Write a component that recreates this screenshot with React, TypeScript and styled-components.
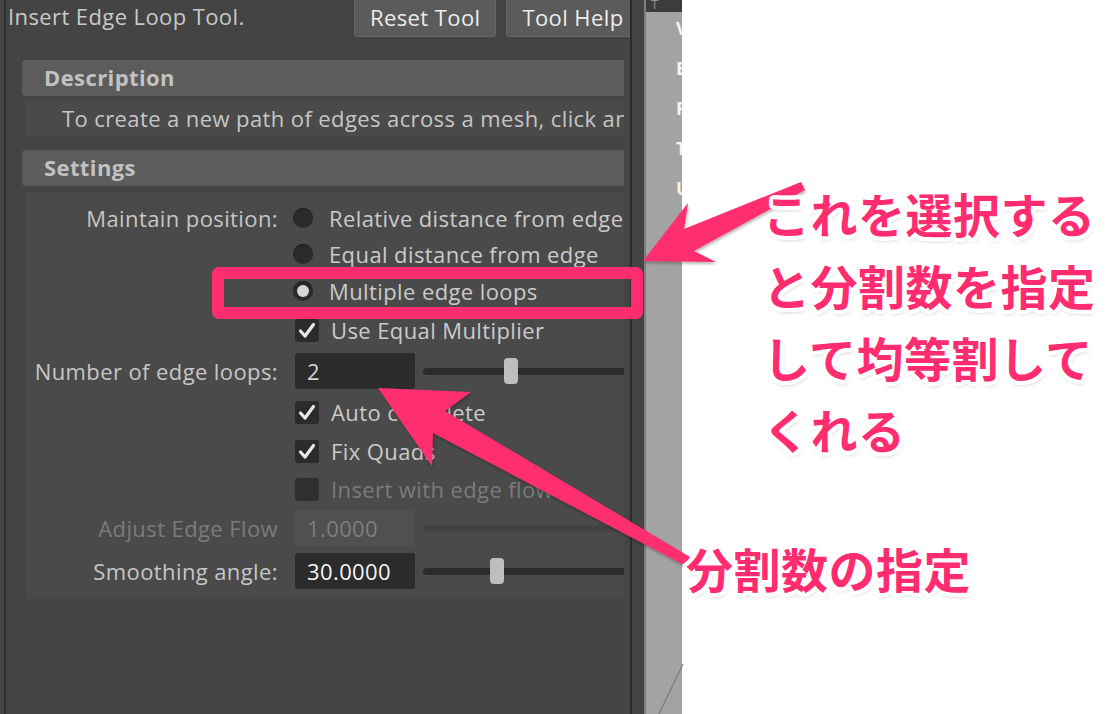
import React from "react";
import styled, { createGlobalStyle } from "styled-components";

const UI_FONT = `"Open Sans", "Noto Sans", "Liberation Sans", sans-serif`;
const JP_FONT = `"Noto Sans CJK JP", "Noto Sans CJK SC", sans-serif`;
const PINK = "#ff2d6f";

const GlobalStyle = createGlobalStyle`
  html, body { margin: 0; padding: 0; background: #ffffff; }
  body { font-family: ${UI_FONT}; }
`;

const Page = styled.div`
  position: relative;
  width: 1118px;
  height: 714px;
  overflow: hidden;
  display: flex;
  background: #ffffff;
  font-family: ${UI_FONT};
  letter-spacing: 0.4px;
`;

/* ---------- tool settings panel ---------- */
const Panel = styled.div`
  flex: 0 0 632px;
  box-sizing: border-box;
  height: 100%;
  padding-left: 4px;
  background: #444444;
  border-right: 2px solid #2b2b2b;
  overflow: hidden;
`;

const PanelInner = styled.div`
  height: 100%;
  border-left: 2px solid #2e2e2e;
  display: flex;
  flex-direction: column;
`;

const TopBar = styled.div`
  display: flex;
  align-items: flex-start;
  height: 37px;
  flex: 0 0 37px;
`;

const ToolTitle = styled.div`
  flex: 0 0 346px;
  padding-left: 2px;
  line-height: 32px;
  font-size: 22px;
  color: #c9c9c9;
  white-space: nowrap;
`;

const ToolButton = styled.div`
  flex: 0 0 auto;
  box-sizing: border-box;
  margin-top: -3px;
  margin-right: 10px;
  height: 40px;
  padding: 0 15px;
  display: flex;
  align-items: center;
  background: #5b5b5b;
  border: 1px solid #676767;
  border-radius: 3px;
  color: #ececec;
  font-size: 22px;
  white-space: nowrap;
`;

const ScrollArea = styled.div`
  width: 618px;
  margin-top: 23px;
  overflow: hidden;
  flex: 1;
`;

const SectionHeader = styled.div<{ $gap?: number }>`
  margin-left: 16px;
  margin-right: -10px;
  margin-top: ${(p) => p.$gap ?? 0}px;
  height: 36px;
  line-height: 35px;
  padding-left: 22px;
  background: #5c5c5c;
  border-radius: 4px;
  font-size: 22px;
  font-weight: 700;
  color: #c2c2c2;
`;

const SectionBody = styled.div`
  margin-left: 20px;
  margin-right: -10px;
  background: #4a4a4a;
`;

const DescriptionBody = styled(SectionBody)`
  margin-top: 5px;
  height: 35px;
  line-height: 35px;
  padding-left: 36px;
  font-size: 22px;
  color: #c6c6c6;
  white-space: nowrap;
  overflow: hidden;
`;

const SettingsBody = styled(SectionBody)`
  margin-top: 6px;
  padding: 8px 0 5px;
`;

const Row = styled.div<{ $h: number }>`
  display: grid;
  grid-template-columns: 252px 1fr;
  column-gap: 15px;
  align-items: center;
  height: ${(p) => p.$h}px;
`;

const Label = styled.div<{ $disabled?: boolean }>`
  text-align: right;
  font-size: 22px;
  color: ${(p) => (p.$disabled ? "#7b7b7b" : "#c6c6c6")};
  white-space: nowrap;
`;

const Controls = styled.div`
  display: flex;
  align-items: center;
  white-space: nowrap;
`;

const RadioDot = styled.div<{ $on?: boolean }>`
  flex: 0 0 20px;
  height: 20px;
  border-radius: 50%;
  background: #2b2b2b;
  box-shadow: inset 0 1px 1px rgba(0, 0, 0, 0.4);
  display: flex;
  align-items: center;
  justify-content: center;
  &::after {
    content: "";
    display: ${(p) => (p.$on ? "block" : "none")};
    width: 12px;
    height: 12px;
    border-radius: 50%;
    background: #d6d6d6;
  }
`;

const OptionText = styled.span<{ $gap: number; $disabled?: boolean }>`
  margin-left: ${(p) => p.$gap}px;
  font-size: 22px;
  color: ${(p) => (p.$disabled ? "#7b7b7b" : "#cacaca")};
`;

const CheckBox = styled.div<{ $disabled?: boolean }>`
  flex: 0 0 24px;
  height: 23px;
  margin-left: 2px;
  border-radius: 3px;
  background: ${(p) => (p.$disabled ? "#2f2f2f" : "#2b2b2b")};
  display: flex;
  align-items: center;
  justify-content: center;
`;

const NumField = styled.div<{ $disabled?: boolean; $bright?: boolean }>`
  flex: 0 0 120px;
  box-sizing: border-box;
  margin-left: 2px;
  height: 36px;
  line-height: 36px;
  padding-left: 12px;
  border-radius: 3px;
  background: ${(p) => (p.$disabled ? "#505050" : "#2b2b2b")};
  color: ${(p) => (p.$disabled ? "#7e7e7e" : p.$bright ? "#f4f4f4" : "#d0d5da")};
  font-size: 22px;
`;

const SliderBox = styled.div`
  position: relative;
  flex: 0 0 240px;
  margin-left: 8px;
  height: 26px;
  display: flex;
  align-items: center;
`;

const Track = styled.div<{ $disabled?: boolean }>`
  width: 100%;
  height: 7px;
  border-radius: 4px;
  background: ${(p) => (p.$disabled ? "#434343" : "#2b2b2b")};
`;

const Thumb = styled.div`
  position: absolute;
  top: 0;
  width: 14px;
  height: 26px;
  border-radius: 4px;
  background: #bebebe;
`;

/* ---------- splitter + viewport ---------- */
const Splitter = styled.div`
  flex: 0 0 14px;
  box-sizing: border-box;
  background: #444444;
  border-right: 2px solid #7f7f7f;
`;

const Viewport = styled.div`
  flex: 0 0 36px;
  background: #a3a3a3;
  overflow: hidden;
  display: flex;
  flex-direction: column;
`;

const ViewHeader = styled.div`
  flex: 0 0 12px;
  background: #3c3c3c;
  color: #8f8f8f;
  font-size: 13px;
  line-height: 8px;
  padding-left: 5px;
  overflow: hidden;
`;

const Hud = styled.div`
  margin-top: -4px;
  padding-left: 30px;
  display: flex;
  flex-direction: column;
`;

const HudItem = styled.div`
  height: 40px;
  line-height: 40px;
  font-size: 18px;
  font-weight: 700;
  color: #f5f5f5;
  white-space: nowrap;
`;

const WhiteArea = styled.div`
  flex: 1;
  background: #ffffff;
`;

/* ---------- annotation overlay ---------- */
const Overlay = styled.div`
  position: absolute;
  inset: 0;
  pointer-events: none;
`;

const ArrowLayer = styled.svg`
  position: absolute;
  left: 0;
  top: 0;
`;

const HighlightBox = styled.div`
  position: absolute;
  left: 212px;
  top: 267px;
  width: 431px;
  height: 52px;
  box-sizing: border-box;
  border: 12px solid ${PINK};
  border-radius: 7px;
`;

const ring = (() => {
  const parts: string[] = [];
  const r = 4;
  for (let i = 0; i < 16; i++) {
    const a = (i / 16) * Math.PI * 2;
    parts.push(`${(Math.cos(a) * r).toFixed(2)}px ${(Math.sin(a) * r).toFixed(2)}px 0 #ffffff`);
  }
  parts.push("1px 3px 5px rgba(0,0,0,0.35)");
  return parts.join(", ");
})();

const Note = styled.div<{ $x: number; $y: number }>`
  position: absolute;
  left: ${(p) => p.$x}px;
  top: ${(p) => p.$y}px;
  font-family: ${JP_FONT};
  font-weight: 700;
  font-size: 47px;
  line-height: 72px;
  letter-spacing: 0.5px;
  color: ${PINK};
  text-shadow: ${ring};
  white-space: nowrap;
`;

const Check = () => (
  <svg width="18" height="17" viewBox="0 0 18 17">
    <path d="M2.5 9 L7 14 L15.5 2.5" fill="none" stroke="#e8e8e8" strokeWidth="3.2" strokeLinecap="round" strokeLinejoin="round" />
  </svg>
);

const Slider = ({ pos, disabled }: { pos?: number; disabled?: boolean }) => (
  <SliderBox>
    <Track $disabled={disabled} />
    {pos !== undefined && <Thumb style={{ left: pos }} />}
  </SliderBox>
);

export default function App() {
  return (
    <>
      <GlobalStyle />
      <Page>
        <Panel>
          <PanelInner>
            <TopBar>
              <ToolTitle>Insert Edge Loop Tool.</ToolTitle>
              <ToolButton>Reset Tool</ToolButton>
              <ToolButton>Tool Help</ToolButton>
            </TopBar>
            <ScrollArea>
              <SectionHeader>Description</SectionHeader>
              <DescriptionBody>
                To create a new path of edges across a mesh, click and drag on an edge.
              </DescriptionBody>
              <SectionHeader $gap={14}>Settings</SectionHeader>
              <SettingsBody>
                <Row $h={36}>
                  <Label>Maintain position:</Label>
                  <Controls>
                    <RadioDot />
                    <OptionText $gap={16}>Relative distance from edge</OptionText>
                  </Controls>
                </Row>
                <Row $h={36}>
                  <Label />
                  <Controls>
                    <RadioDot />
                    <OptionText $gap={16}>Equal distance from edge</OptionText>
                  </Controls>
                </Row>
                <Row $h={38}>
                  <Label />
                  <Controls>
                    <RadioDot $on />
                    <OptionText $gap={16}>Multiple edge loops</OptionText>
                  </Controls>
                </Row>
                <Row $h={40}>
                  <Label />
                  <Controls>
                    <CheckBox><Check /></CheckBox>
                    <OptionText $gap={12}>Use Equal Multiplier</OptionText>
                  </Controls>
                </Row>
                <Row $h={42}>
                  <Label>Number of edge loops:</Label>
                  <Controls>
                    <NumField>2</NumField>
                    <Slider pos={81} />
                  </Controls>
                </Row>
                <Row $h={40}>
                  <Label />
                  <Controls>
                    <CheckBox><Check /></CheckBox>
                    <OptionText $gap={12}>Auto complete</OptionText>
                  </Controls>
                </Row>
                <Row $h={38}>
                  <Label />
                  <Controls>
                    <CheckBox><Check /></CheckBox>
                    <OptionText $gap={12}>Fix Quads</OptionText>
                  </Controls>
                </Row>
                <Row $h={38}>
                  <Label />
                  <Controls>
                    <CheckBox $disabled />
                    <OptionText $gap={12} $disabled>Insert with edge flow</OptionText>
                  </Controls>
                </Row>
                <Row $h={40}>
                  <Label $disabled>Adjust Edge Flow</Label>
                  <Controls>
                    <NumField $disabled>1.0000</NumField>
                    <Slider disabled />
                  </Controls>
                </Row>
                <Row $h={46}>
                  <Label>Smoothing angle:</Label>
                  <Controls>
                    <NumField $bright>30.0000</NumField>
                    <Slider pos={67} />
                  </Controls>
                </Row>
              </SettingsBody>
            </ScrollArea>
          </PanelInner>
        </Panel>
        <Splitter />
        <Viewport>
          <ViewHeader>T</ViewHeader>
          <Hud>
            <HudItem>Verts:</HudItem>
            <HudItem>Edges:</HudItem>
            <HudItem>Faces:</HudItem>
            <HudItem>Tris:</HudItem>
            <HudItem>UVs:</HudItem>
          </Hud>
        </Viewport>
        <WhiteArea />

        <Overlay>
          <ArrowLayer width="1118" height="714" viewBox="0 0 1118 714">
            <defs>
              <filter id="arrowShadow" x="-10%" y="-10%" width="130%" height="130%">
                <feDropShadow dx="1" dy="2" stdDeviation="1.5" floodColor="#000" floodOpacity="0.3" />
              </filter>
            </defs>
            <line x1="683" y1="664" x2="658" y2="716" stroke="#7a7a7a" strokeWidth="1.2" />
            <polygon
              points="643,261 688,203 684,229 801,182 805,190 694,251 716,262"
              fill={PINK}
              filter="url(#arrowShadow)"
            />
            <polygon
              points="378,388 471,392 445,411 690,557 686,566 433,433 432,466"
              fill={PINK}
              filter="url(#arrowShadow)"
            />
          </ArrowLayer>
          <HighlightBox />
          <Note $x={763} $y={177}>
            これを選択する
            <br />
            と分割数を指定
            <br />
            して均等割して
            <br />
            くれる
          </Note>
          <Note $x={686} $y={532}>分割数の指定</Note>
        </Overlay>
      </Page>
    </>
  );
}
